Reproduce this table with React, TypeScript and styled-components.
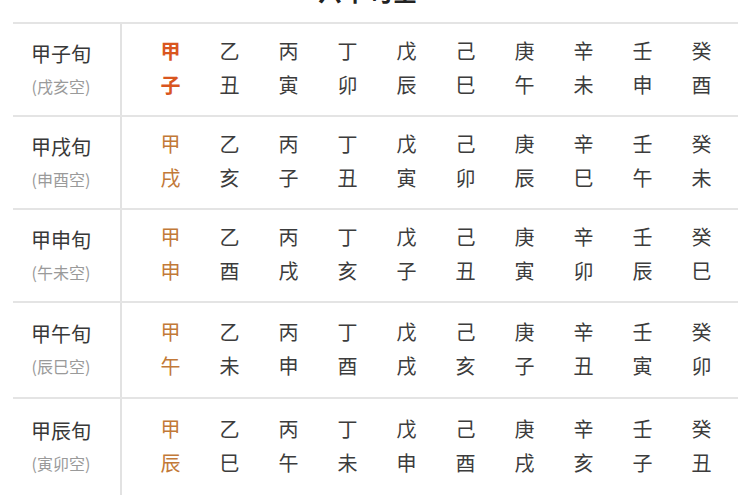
import styled, { createGlobalStyle } from 'styled-components';

const GlobalStyle = createGlobalStyle`
  html, body {
    margin: 0;
    padding: 0;
    background: #fff;
  }
  body {
    font-family: 'Noto Sans CJK SC', 'Noto Sans', sans-serif;
    color: #333;
  }
`;

const stems = ['甲', '乙', '丙', '丁', '戊', '己', '庚', '辛', '壬', '癸'];

// 六甲旬：旬名、空亡、地支
const rows = [
  { name: '甲子旬', empty: '戌亥空', branches: ['子', '丑', '寅', '卯', '辰', '巳', '午', '未', '申', '酉'], height: 93, strong: true },
  { name: '甲戌旬', empty: '申酉空', branches: ['戌', '亥', '子', '丑', '寅', '卯', '辰', '巳', '午', '未'], height: 93 },
  { name: '甲申旬', empty: '午未空', branches: ['申', '酉', '戌', '亥', '子', '丑', '寅', '卯', '辰', '巳'], height: 93 },
  { name: '甲午旬', empty: '辰巳空', branches: ['午', '未', '申', '酉', '戌', '亥', '子', '丑', '寅', '卯'], height: 96 },
  { name: '甲辰旬', empty: '寅卯空', branches: ['辰', '巳', '午', '未', '申', '酉', '戌', '亥', '子', '丑'], height: 98 },
];

const Page = styled.div`
  width: 750px;
  height: 500px;
  overflow: hidden;
`;

const Title = styled.h2`
  margin: -21px 0 0;
  height: 43px;
  padding-right: 14px;
  font-size: 24px;
  line-height: 24px;
  font-weight: 700;
  text-align: center;
  color: #222;
  letter-spacing: 1px;
`;

const Table = styled.div`
  margin: 0 12px 0 13px;
`;

const Row = styled.div<{ $h: number }>`
  display: flex;
  height: ${(p) => p.$h}px;
  border-top: 2px solid #e4e4e4;
  box-sizing: border-box;
`;

const LabelCell = styled.div`
  width: 109px;
  padding-right: 11px;
  box-sizing: border-box;
  border-right: 2px solid #e2e2e2;
  display: flex;
  flex-direction: column;
  align-items: center;
  justify-content: center;
`;

const LabelName = styled.div`
  font-size: 20px;
  line-height: 33px;
  color: #383838;
`;

const LabelEmpty = styled.div`
  font-size: 16px;
  line-height: 33px;
  color: #9a9a9a;
`;

const Cells = styled.div`
  display: grid;
  grid-template-columns: repeat(10, 59px);
  padding-left: 19px;
  align-content: center;
  padding-bottom: 3px;
`;

const Col = styled.div`
  display: flex;
  flex-direction: column;
  align-items: center;
`;

const Char = styled.span<{ $tone?: 'strong' | 'warm' }>`
  font-size: 20px;
  line-height: 34px;
  color: ${(p) => (p.$tone === 'strong' ? '#d9561f' : p.$tone === 'warm' ? '#c27938' : '#3c3c3c')};
  font-weight: ${(p) => (p.$tone === 'strong' ? 700 : 400)};
`;

export default function App() {
  return (
    <Page>
      <GlobalStyle />
      <Title>六甲旬空</Title>
      <Table>
        {rows.map((row) => (
          <Row key={row.name} $h={row.height}>
            <LabelCell>
              <LabelName>{row.name}</LabelName>
              <LabelEmpty>({row.empty})</LabelEmpty>
            </LabelCell>
            <Cells>
              {stems.map((s, i) => {
                const tone = i === 0 ? (row.strong ? 'strong' : 'warm') : undefined;
                return (
                  <Col key={s}>
                    <Char $tone={tone}>{s}</Char>
                    <Char $tone={tone}>{row.branches[i]}</Char>
                  </Col>
                );
              })}
            </Cells>
          </Row>
        ))}
      </Table>
    </Page>
  );
}
